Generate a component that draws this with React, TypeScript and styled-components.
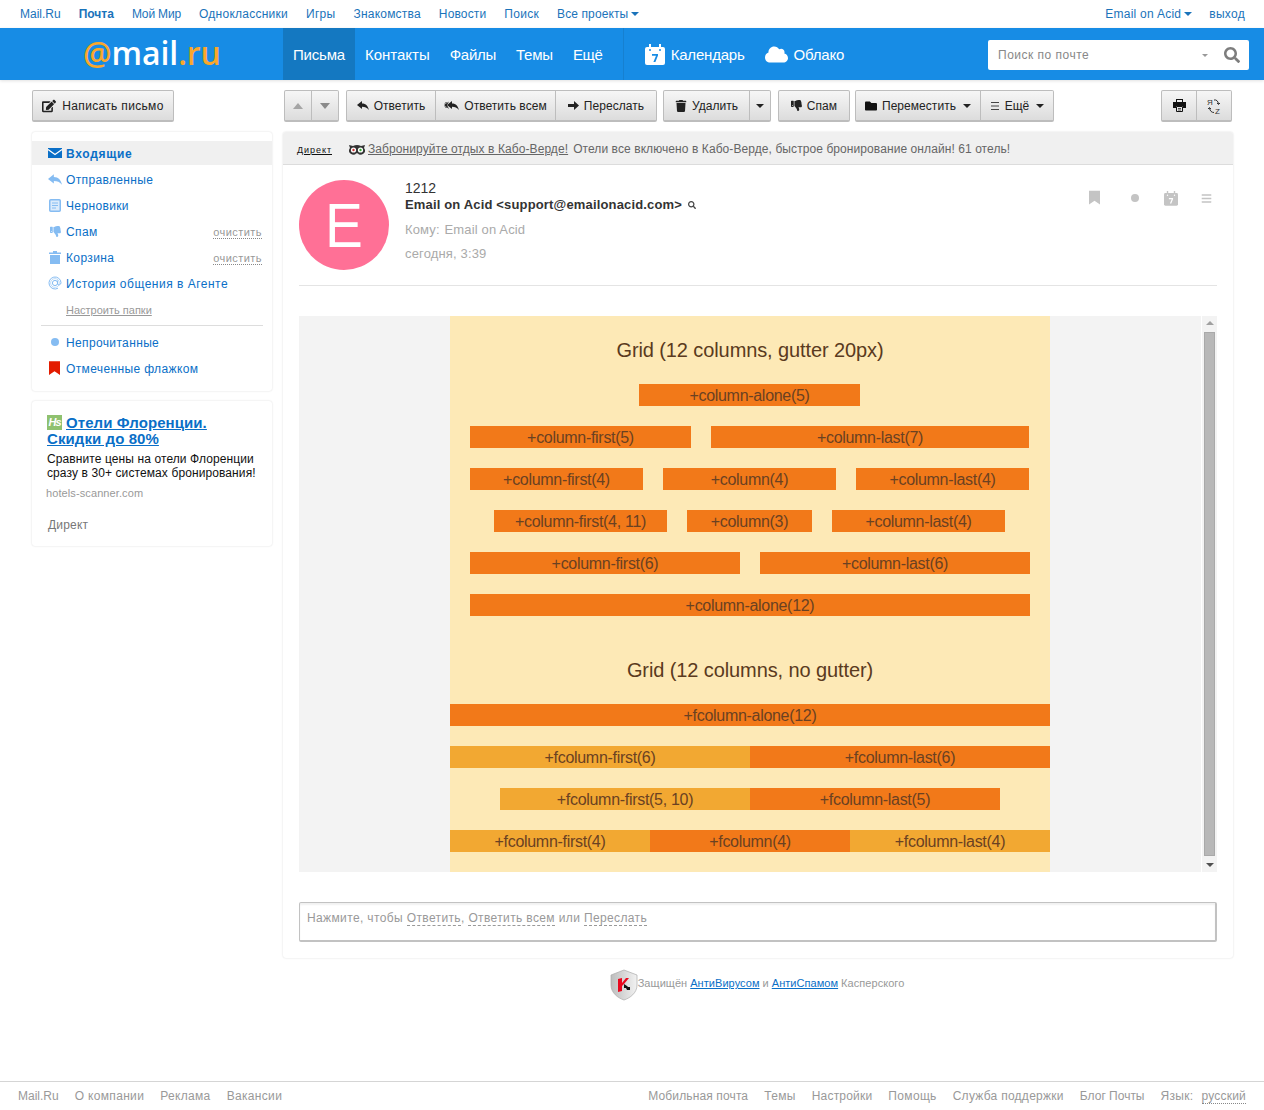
import React from "react";
import styled, { createGlobalStyle } from "styled-components";
import { FaTrash, FaThumbsDown, FaFolder, FaEdit, FaCloud, FaSearch, FaBars } from "react-icons/fa";

const Global = createGlobalStyle`
  html, body { margin: 0; padding: 0; background: #fff; }
  body { font-family: "Liberation Sans", Arial, sans-serif; font-size: 12px; color: #333; }
  a { color: inherit; text-decoration: none; }
`;

const Page = styled.div`
  width: 1264px; height: 1110px; display: flex; flex-direction: column; overflow: hidden;
`;
const TopBar = styled.div`
  height: 28px; display: flex; align-items: center; justify-content: space-between; padding: 0 19px 0 20px;
  color: #1a73ba; flex: none;
`;
const TopGroup = styled.nav<{ $gap: number }>`
  display: flex; align-items: center; gap: ${p => p.$gap}px;
`;
const TopLink = styled.a<{ $bold?: boolean; $ls?: number }>`
  font-weight: ${p => (p.$bold ? 700 : 400)};
  display: inline-flex; align-items: center;
  letter-spacing: ${p => p.$ls ?? 0.3}px;
`;
const Caret = styled.i<{ $color?: string; $left?: number }>`
  display: inline-block; width: 0; height: 0; margin-left: ${p => p.$left ?? 3}px;
  border-left: 4px solid transparent; border-right: 4px solid transparent;
  border-top: 4px solid ${p => p.$color ?? "#1a73ba"};
`;
const SmallCaret = styled(Caret)`
  border-left-width: 3px; border-right-width: 3px; border-top-width: 3px;
`;
const Header = styled.header`
  height: 52px; background: #178ce5; display: flex; align-items: stretch; flex: none;
  box-shadow: 0 1px 3px rgba(0,0,0,.12);
`;
const LogoArea = styled.div`
  width: 283px; padding-left: 83px; box-sizing: border-box; display: flex; align-items: center; flex: none;
`;
const Logo = styled.div`
  font-family: "Open Sans", "Noto Sans", sans-serif; font-size: 32px; font-weight: 600; letter-spacing: -0.1px;
  color: #fff; line-height: 1; margin-top: -3px;
`;
const LogoAccent = styled.span`
  color: #f9a72b;
`;
const Tab = styled.a<{ $active?: boolean; $ls?: number }>`
  display: flex; align-items: center; gap: 6px; padding: 0 10px; font-size: 15px; letter-spacing: ${p => p.$ls ?? -0.2}px;
  color: #fff; background: ${p => (p.$active ? "#1478c1" : "transparent")};
`;
const HeaderSep = styled.div`
  width: 1px; margin: 0 21px 0 10px; background: #1680d0;
`;
const IconTab = styled(Tab)`
  padding: 0; margin-right: 20px;
`;
const SearchBox = styled.div`
  width: 261px; height: 30px; background: #fff; border-radius: 2px; margin: 12px 15px 0 auto;
  display: flex; align-items: center; padding: 0 9px 0 10px; box-sizing: border-box; color: #888; letter-spacing: 0.5px;
`;
const SearchText = styled.span`
  flex: 1;
`;
const SearchIcon = styled(FaSearch)`
  font-size: 16px; color: #7d7d7d; margin-left: 16px;
`;
const Body = styled.div`
  display: grid; grid-template-columns: 241px 950px; column-gap: 10px; padding-left: 32px; flex: 1; align-items: start; margin-top: 10px;
`;
const Side = styled.aside`
  display: flex; flex-direction: column; align-items: stretch;
`;
const Btn = styled.button<{ $w?: number }>`
  height: 32px; box-sizing: border-box; display: inline-flex; align-items: center; justify-content: center; gap: 5px;
  padding: 0; ${p => (p.$w ? `width: ${p.$w}px;` : "")} flex: none;
  font: 12px "Liberation Sans", Arial, sans-serif; letter-spacing: 0.05px; color: #222;
  background: linear-gradient(#f6f6f6, #dcdcdc);
  border: 1px solid #bdbdbd; border-bottom-width: 2px; border-radius: 2px;
`;
const Group = styled.div<{ $shift?: number }>`
  display: flex; flex: none; margin-left: ${p => p.$shift ?? 0}px;
  & > button { border-radius: 0; border-left: none; }
  & > button:first-child { border-left: 1px solid #bdbdbd; border-radius: 2px 0 0 2px; }
  & > button:last-child { border-radius: 0 2px 2px 0; }
`;
const ComposeBtn = styled(Btn)`
  width: 142px; margin-bottom: 10px; letter-spacing: 0.33px; gap: 6px;
`;
const Card = styled.div`
  background: #fff; border-radius: 3px; box-shadow: 0 0 2px rgba(0,0,0,.16);
`;
const FolderCard = styled(Card)`
  width: 240px; padding: 9px 0 9px; box-sizing: border-box; height: 259px;
`;
const FolderRow = styled.a<{ $active?: boolean }>`
  height: 24px; margin-bottom: 2px; display: flex; align-items: center; padding: 0 10px 0 16px;
  color: #0a6fc7; letter-spacing: ${p => (p.$active ? 0.7 : 0.36)}px; font-weight: ${p => (p.$active ? 700 : 400)};
  background: ${p => (p.$active ? "#f0f0f0" : "transparent")};
`;
const FolderIcon = styled.span<{ $color?: string; $pad?: number }>`
  width: 18px; flex: none; display: flex; align-items: center; box-sizing: border-box; padding-left: ${p => p.$pad ?? 0}px;
  color: ${p => p.$color ?? "#85bcf2"}; font-size: 13px;
`;
const FolderName = styled.span<{ $ls?: number }>`
  flex: 1; padding-top: 2px; ${p => (p.$ls ? `letter-spacing: ${p.$ls}px;` : "")}
`;
const Clear = styled.span`
  font-size: 11px; color: #999; border-bottom: 1px dotted #888; line-height: 12px; letter-spacing: 0.45px; margin-top: 3px;
`;
const Configure = styled.a`
  display: block; height: 20px; margin: 5px 0 5px 34px; line-height: 21px; font-size: 11px; color: #999; text-decoration: underline;
`;
const SideDivider = styled.div`
  height: 1px; margin: 0 9px 4px; background: #ddd;
`;
const AdCard = styled(Card)`
  width: 240px; height: 145px; margin-top: 10px; padding: 14px 14px 0 15px; box-sizing: border-box;
`;
const AdTitle = styled.a`
  display: block; font-size: 15px; font-weight: 700; line-height: 16px; color: #0a6fc7; text-decoration: underline; letter-spacing: 0.08px;
`;
const HsBadge = styled.span`
  display: inline-block; width: 15px; height: 15px; background: #8fc16f; color: #fff; font: italic 700 11px/15px "Liberation Sans", sans-serif;
  text-align: center; vertical-align: top; margin: 0 4px 0 0;
  letter-spacing: -1px;
`;
const AdText = styled.p`
  margin: 5px 0 0; line-height: 14px; color: #111; letter-spacing: 0.1px; white-space: nowrap;
`;
const AdDomain = styled.div`
  margin: 6px 0 0 -1px; font-size: 11px; line-height: 14px; color: #999; letter-spacing: 0.1px;
`;
const AdLabel = styled.div`
  margin: 18px 0 0 1px; line-height: 14px; color: #777; letter-spacing: 0.2px;
`;
const Main = styled.main`
  display: flex; flex-direction: column;
`;
const Toolbar = styled.div`
  display: flex; align-items: center; gap: 7px; padding-left: 1px; height: 32px; margin-bottom: 10px;
`;
const ToolbarEnd = styled(Group)`
  margin-left: auto; margin-right: 1px;
`;
const TipBtn = styled.i<{ $up?: boolean; $color: string }>`
  width: 0; height: 0; border-left: 5px solid transparent; border-right: 5px solid transparent;
  ${p => (p.$up ? `border-bottom: 6px solid ${p.$color};` : `border-top: 6px solid ${p.$color};`)}
`;
const ScrollTip = styled(TipBtn)`
  border-left-width: 4px; border-right-width: 4px;
  ${p => (p.$up ? "border-bottom-width: 4px;" : "border-top-width: 4px;")}
`;
const MailCard = styled(Card)`
  height: 826px; display: flex; flex-direction: column;
`;
const AdStrip = styled.div`
  height: 33px; flex: none; box-sizing: border-box; background: #f0f0f0; border-bottom: 1px solid #dcdcdc; border-radius: 3px 3px 0 0;
  display: flex; align-items: center; padding: 2px 0 0 14px; color: #666; letter-spacing: 0.08px; white-space: nowrap;
`;
const DirectLabel = styled.a`
  font-size: 9px; font-weight: 400; color: #111; text-decoration: underline; letter-spacing: 0.95px; margin: 2px 17px 0 0;
`;
const StripLink = styled.a`
  color: #666; text-decoration: underline; margin: 0 5px 0 3px;
`;
const MailHead = styled.div`
  margin: 15px 16px 0; height: 106px; flex: none; box-sizing: border-box; border-bottom: 1px solid #e4e4e4; display: flex; position: relative;
`;
const Avatar = styled.div`
  width: 90px; height: 90px; border-radius: 50%; background: #ff7096; color: #fff; display: flex; align-items: center; justify-content: center;
  font-size: 63px; font-weight: 400; line-height: 1; flex: none;
`;
const AvatarLetter = styled.span`
  display: inline-block; transform: scaleX(0.9);
`;
const Meta = styled.div`
  margin-left: 16px; display: flex; flex-direction: column;
`;
const Subject = styled.div`
  font-size: 14px; line-height: 16px; color: #333;
`;
const From = styled.div`
  font-size: 13px; font-weight: 700; line-height: 16px; color: #333; display: flex; align-items: center; gap: 6px; letter-spacing: 0.16px; margin-top: 1px;
`;
const MetaLine = styled.div<{ $top: number }>`
  margin-top: ${p => p.$top}px; font-size: 13px; line-height: 16px; color: #aaa; letter-spacing: 0.15px;
`;
const MetaValue = styled.span`
  margin-left: 1px;
`;
const HeadIcons = styled.div`
  margin-left: auto; display: flex; align-items: flex-start; padding-top: 10px; height: 20px; margin-right: 5px; gap: 0;
`;
const HeadIcon = styled.span<{ $left: number; $top: number }>`
  display: flex; margin: ${p => p.$top}px 0 0 ${p => p.$left}px;
`;
const Frame = styled.div`
  margin: 30px 16px 0; height: 556px; flex: none; background: #f3f3f3; display: flex;
`;
const FrameArea = styled.div`
  flex: 1; display: flex; justify-content: center;
`;
const Sheet = styled.div`
  width: 600px; background: #fde9b6; color: #6a4122; padding-top: 20px; box-sizing: border-box; display: flex; flex-direction: column;
`;
const SheetTitle = styled.h2<{ $top?: number }>`
  margin: ${p => p.$top ?? 0}px 0 0; height: 28px; font-size: 20px; line-height: 28px; font-weight: 400; text-align: center; color: #5a3a20; letter-spacing: -0.1px;
`;
const BarRow = styled.div<{ $top: number; $left: number; $gap: number }>`
  display: flex; gap: ${p => p.$gap}px; margin: ${p => p.$top}px 0 0 ${p => p.$left}px; height: 22px;
`;
const Bar = styled.div<{ $w: number; $light?: boolean }>`
  width: ${p => p.$w}px; height: 22px; flex: none; background: ${p => (p.$light ? "#f2a832" : "#f27919")};
  text-align: center; font-size: 16px; line-height: 24px; color: #6a4122; letter-spacing: -0.3px; overflow: hidden;
`;
const ScrollBar = styled.div`
  width: 15px; flex: none; border-left: 1px solid #fff; display: flex; flex-direction: column; align-items: center; background: #f3f3f3;
`;
const ScrollThumb = styled.div`
  width: 11px; height: 524px; box-sizing: border-box; background: #b8b8b8; border: 1px solid #a9a9a9; margin: 2px 0;
`;
const ScrollBtn = styled.div`
  height: 14px; display: flex; align-items: center; justify-content: center;
`;
const ReplyBox = styled.div`
  margin: 30px 16px 0; height: 40px; box-sizing: border-box; border: 1px solid #c2c2c2; border-width: 1px 2px 2px 1px; border-radius: 2px; box-shadow: inset 0 2px 2px rgba(0,0,0,.06);
  padding: 8px 7px; color: #999; letter-spacing: 0.37px; line-height: 14px;
`;
const Dashed = styled.span`
  border-bottom: 1px dashed #999;
`;
const Kaspersky = styled.div`
  display: flex; align-items: flex-start; justify-content: center; height: 32px; margin: 11px 0 0 -2px; font-size: 11px; line-height: 28px; color: #999; letter-spacing: 0.05px;
`;
const ShieldMark = styled.svg`
  margin-right: 0; flex: none;
`;
const KLink = styled.a`
  color: #0a6fc7; text-decoration: underline; margin: 0 3px;
`;
const Footer = styled.footer`
  height: 29px; flex: none; box-sizing: border-box; border-top: 1px solid #d5d5d5; display: flex; align-items: center; justify-content: space-between;
  padding: 0 18px; color: #999; margin-top: auto;
`;
const FooterGroup = styled.div`
  display: flex; gap: 16px;
`;
const FootItem = styled.span<{ $ls?: number }>`
  letter-spacing: ${p => p.$ls ?? 0.33}px;
`;
const Dotted = styled(FootItem)`
  border-bottom: 1px dotted #888; color: #999; margin-left: -8px;
`;

const CalIcon = ({ bg, fg, size }: { bg: string; fg: string; size: number }) => (
  <svg width={size} height={size * 1.05} viewBox="0 0 20 21">
    <rect x="0" y="3" width="20" height="18" rx="2" fill={bg} />
    <rect x="4" y="0" width="2" height="5" fill={bg} />
    <rect x="14" y="0" width="2" height="5" fill={bg} />
    <circle cx="5" cy="6" r="1" fill={fg} />
    <circle cx="15" cy="6" r="1" fill={fg} />
    <path d="M7 10h6v1.6L10.4 18H8.4l2.6-6.2H7z" fill={fg} />
  </svg>
);
const Owl = () => (
  <svg width="16" height="11" viewBox="0 0 16 11">
    <path d="M0 1 L4 2 Q8 0 12 2 L16 1 L15 4 A4 4 0 1 1 8.5 9 L8 10 L7.5 9 A4 4 0 1 1 1 4Z" fill="#333" />
    <circle cx="4.5" cy="6" r="2.6" fill="#fff" /><circle cx="11.5" cy="6" r="2.6" fill="#fff" />
    <circle cx="4.5" cy="6" r="1.2" fill="#c33" /><circle cx="11.5" cy="6" r="1.2" fill="#3a3" />
  </svg>
);
const Bookmark = ({ color, w, h }: { color: string; w: number; h: number }) => (
  <svg width={w} height={h} viewBox="0 0 12 15"><path d="M0 0h12v15L6 11 0 15z" fill={color} /></svg>
);
const Envelope = () => (
  <svg width="14" height="10" viewBox="0 0 14 10">
    <rect width="14" height="10" fill="#0a6fc7" />
    <path d="M0 1.5 L7 6.5 L14 1.5" fill="none" stroke="#fff" strokeWidth="1.2" />
  </svg>
);
const Draft = () => (
  <svg width="12" height="13" viewBox="0 0 12 13">
    <rect x=".75" y=".75" width="10.5" height="11.5" rx="1" fill="#dcebfb" stroke="#85bcf2" strokeWidth="1.5" />
    <path d="M3 4h6M3 6.5h6M3 9h4" stroke="#85bcf2" />
  </svg>
);
const Trash = () => (
  <svg width="12" height="13" viewBox="0 0 12 13"><path d="M4 0h4v1.4h4v1.6H0V1.4h4zM1 4h10v9H1z" fill="#85bcf2" /></svg>
);
const AtSign = () => (
  <svg width="14" height="14" viewBox="0 0 14 14" fill="none" stroke="#85bcf2">
    <circle cx="7" cy="7" r="2.6" /><path d="M9.6 4.5v3.2c0 1.8 3.4 1.6 3.4-1A6 6 0 1 0 10 12.2" /><circle cx="7" cy="7" r="4.4" strokeOpacity=".5" />
  </svg>
);
const Dot = ({ color, size }: { color: string; size: number }) => (
  <svg width={size} height={size} viewBox="0 0 10 10"><circle cx="5" cy="5" r="5" fill={color} /></svg>
);
const Shield = () => (
  <ShieldMark width="28" height="32" viewBox="0 0 28 32">
    <defs><linearGradient id="sh" x1="0" x2="1"><stop offset="0" stopColor="#bdbdbd" /><stop offset="1" stopColor="#f2f2f2" /></linearGradient></defs>
    <path d="M14 1 L27 6 V16 C27 24 20 29 14 31 C8 29 1 24 1 16 V6Z" fill="url(#sh)" stroke="#aaa" strokeWidth=".7" />
    <path d="M8 10l4-1v5l4-5h3l-5 6-2 2v5l-4 1z" fill="#e8081e" />
    <path d="M14 15l3 2 1 1h2v3h-3l-1-2h-2z" fill="#111" />
  </ShieldMark>
);
const ReplyIcon = ({ color, w = 12, h = 9 }: { color: string; w?: number; h?: number }) => (
  <svg width={w} height={h} viewBox="0 0 12 9"><path d="M0 4 L5 0 V2.4 C9 2.4 11 5 12 9 C10 6.6 8 5.8 5 5.8 V8 Z" fill={color} /></svg>
);
const ReplyAllIcon = () => (
  <svg width="15" height="9" viewBox="0 0 15 9">
    <path d="M3 4 L8 0 V2.4 C12 2.4 14 5 15 9 C13 6.6 11 5.8 8 5.8 V8 Z" fill="#222" />
    <path d="M5 0.5 L0 4 L5 8 L3 4z" fill="#222" />
    <path d="M2.5 1 L1 2.6 M2.5 7 L1 5.4" stroke="#222" />
  </svg>
);
const ForwardIcon = () => (
  <svg width="11" height="9" viewBox="0 0 11 9"><path d="M0 3h6V0l5 4.5L6 9V6H0z" fill="#222" /></svg>
);
const PrintIcon = () => (
  <svg width="13" height="13" viewBox="0 0 13 13">
    <path d="M3 0h7v3H9V1H4v2H3z" fill="#111" />
    <path d="M0 3h13v6h-3V7H3v2H0z" fill="#111" />
    <path d="M3.5 7.5h6v5h-6z" fill="none" stroke="#111" />
    <path d="M5 9.5h3M5 11h3" stroke="#111" strokeWidth=".7" />
  </svg>
);
const Lines = () => (
  <svg width="10" height="10" viewBox="0 0 10 10"><path d="M1 1.5h8M1 5h8M1 8.5h8" stroke="#444" strokeWidth="1" /></svg>
);
const Translate = () => (
  <svg width="14" height="16" viewBox="0 0 14 16" fill="none" stroke="#333" strokeWidth="1">
    <text x="0" y="7" fontSize="8" fontFamily="Liberation Sans" fill="#333" stroke="none">Я</text>
    <text x="8" y="15.5" fontSize="8" fontFamily="Liberation Sans" fill="#333" stroke="none">Z</text>
    <path d="M7 2 C9.5 1.5 11 3 11.5 6" />
    <path d="M7 14.5 C4.5 14.5 3 13 2.5 10" />
    <path d="M10 5l1.5 1.5L13 5M1 11l1.5-1.5L4 11" />
  </svg>
);

type B = { w: number; t: string; light?: boolean };
const Bars = ({ top, left, gap, items }: { top: number; left: number; gap: number; items: B[] }) => (
  <BarRow $top={top} $left={left} $gap={gap}>
    {items.map(i => <Bar key={i.t} $w={i.w} $light={i.light}>{i.t}</Bar>)}
  </BarRow>
);

export default function App() {
  return (
    <Page>
      <Global />
      <TopBar>
        <TopGroup $gap={18}>
          <TopLink $ls={0}>Mail.Ru</TopLink>
          <TopLink $bold $ls={0}>Почта</TopLink>
          <TopLink $ls={-0.15}>Мой Мир</TopLink>
          <TopLink $ls={0.25}>Одноклассники</TopLink>
          <TopLink>Игры</TopLink>
          <TopLink $ls={0.2}>Знакомства</TopLink>
          <TopLink $ls={0.15}>Новости</TopLink>
          <TopLink>Поиск</TopLink>
          <TopLink $ls={0.1}>Все проекты<Caret /></TopLink>
        </TopGroup>
        <TopGroup $gap={17}>
          <TopLink $ls={0.25}>Email on Acid<Caret /></TopLink>
          <TopLink>выход</TopLink>
        </TopGroup>
      </TopBar>
      <Header>
        <LogoArea>
          <Logo><LogoAccent>@</LogoAccent>mail<LogoAccent>.ru</LogoAccent></Logo>
        </LogoArea>
        <Tab $active>Письма</Tab>
        <Tab $ls={0}>Контакты</Tab>
        <Tab $ls={-0.3}>Файлы</Tab>
        <Tab>Темы</Tab>
        <Tab $ls={-0.3}>Ещё</Tab>
        <HeaderSep />
        <IconTab><CalIcon bg="#fff" fg="#178ce5" size={20} />Календарь</IconTab>
        <IconTab><FaCloud size={23} color="#fff" />Облако</IconTab>
        <SearchBox>
          <SearchText>Поиск по почте</SearchText>
          <SmallCaret $color="#999" />
          <SearchIcon />
        </SearchBox>
      </Header>
      <Body>
        <Side>
          <ComposeBtn><FaEdit size={14} color="#222" />Написать письмо</ComposeBtn>
          <FolderCard>
            <FolderRow $active><FolderIcon><Envelope /></FolderIcon><FolderName>Входящие</FolderName></FolderRow>
            <FolderRow><FolderIcon><ReplyIcon color="#85bcf2" w={14} h={11} /></FolderIcon><FolderName>Отправленные</FolderName></FolderRow>
            <FolderRow><FolderIcon $pad={1}><Draft /></FolderIcon><FolderName>Черновики</FolderName></FolderRow>
            <FolderRow><FolderIcon $pad={2}><FaThumbsDown size={11} /></FolderIcon><FolderName>Спам</FolderName><Clear>очистить</Clear></FolderRow>
            <FolderRow><FolderIcon $pad={1}><Trash /></FolderIcon><FolderName>Корзина</FolderName><Clear>очистить</Clear></FolderRow>
            <FolderRow><FolderIcon><AtSign /></FolderIcon><FolderName $ls={0.5}>История общения в Агенте</FolderName></FolderRow>
            <Configure>Настроить папки</Configure>
            <SideDivider />
            <FolderRow><FolderIcon $pad={3}><Dot color="#85bcf2" size={8} /></FolderIcon><FolderName>Непрочитанные</FolderName></FolderRow>
            <FolderRow><FolderIcon $pad={1}><Bookmark color="#e31c00" w={11} h={14} /></FolderIcon><FolderName>Отмеченные флажком</FolderName></FolderRow>
          </FolderCard>
          <AdCard>
            <AdTitle><HsBadge>Hs</HsBadge>Отели Флоренции.<br />Скидки до 80%</AdTitle>
            <AdText>Сравните цены на отели Флоренции<br />сразу в 30+ системах бронирования!</AdText>
            <AdDomain>hotels-scanner.com</AdDomain>
            <AdLabel>Директ</AdLabel>
          </AdCard>
        </Side>
        <Main>
          <Toolbar>
            <Group>
              <Btn $w={28}><TipBtn $up $color="#a5a5a5" /></Btn>
              <Btn $w={27}><TipBtn $color="#8a8a8a" /></Btn>
            </Group>
            <Group>
              <Btn $w={90}><ReplyIcon color="#222" />Ответить</Btn>
              <Btn $w={120}><ReplyAllIcon />Ответить всем</Btn>
              <Btn $w={101}><ForwardIcon />Переслать</Btn>
            </Group>
            <Group $shift={-1}>
              <Btn $w={87}><FaTrash size={12} color="#222" />Удалить</Btn>
              <Btn $w={21}><Caret $color="#222" $left={0} /></Btn>
            </Group>
            <Btn $w={72}><FaThumbsDown size={11} color="#222" />Спам</Btn>
            <Group $shift={-2}>
              <Btn $w={126}><FaFolder size={12} color="#111" />Переместить<Caret $color="#222" $left={2} /></Btn>
              <Btn $w={73}><Lines />Ещё<Caret $color="#222" $left={2} /></Btn>
            </Group>
            <ToolbarEnd>
              <Btn $w={36}><PrintIcon /></Btn>
              <Btn $w={35}><Translate /></Btn>
            </ToolbarEnd>
          </Toolbar>
          <MailCard>
            <AdStrip>
              <DirectLabel>Директ</DirectLabel>
              <Owl />
              <StripLink>Забронируйте отдых в Кабо-Верде!</StripLink>
              Отели все включено в Кабо-Верде, быстрое бронирование онлайн! 61 отель!
            </AdStrip>
            <MailHead>
              <Avatar><AvatarLetter>E</AvatarLetter></Avatar>
              <Meta>
                <Subject>1212</Subject>
                <From>Email on Acid &lt;support@emailonacid.com&gt; <FaSearch size={8} color="#444" /></From>
                <MetaLine $top={9}>Кому: <MetaValue>Email on Acid</MetaValue></MetaLine>
                <MetaLine $top={8}>сегодня, 3:39</MetaLine>
              </Meta>
              <HeadIcons>
                <Bookmark color="#c4c4c4" w={11} h={15} />
                <HeadIcon $left={31} $top={4}><Dot color="#c4c4c4" size={8} /></HeadIcon>
                <HeadIcon $left={25} $top={1}><CalIcon bg="#c4c4c4" fg="#fff" size={14} /></HeadIcon>
                <HeadIcon $left={23} $top={3}><FaBars size={11} color="#c4c4c4" /></HeadIcon>
              </HeadIcons>
            </MailHead>
            <Frame>
              <FrameArea>
                <Sheet>
                  <SheetTitle>Grid (12 columns, gutter 20px)</SheetTitle>
                  <Bars top={20} left={189} gap={0} items={[{ w: 221, t: "+column-alone(5)" }]} />
                  <Bars top={20} left={20} gap={20} items={[{ w: 221, t: "+column-first(5)" }, { w: 318, t: "+column-last(7)" }]} />
                  <Bars top={20} left={20} gap={20} items={[{ w: 173, t: "+column-first(4)" }, { w: 173, t: "+column(4)" }, { w: 173, t: "+column-last(4)" }]} />
                  <Bars top={20} left={44} gap={20} items={[{ w: 173, t: "+column-first(4, 11)" }, { w: 125, t: "+column(3)" }, { w: 173, t: "+column-last(4)" }]} />
                  <Bars top={20} left={20} gap={20} items={[{ w: 270, t: "+column-first(6)" }, { w: 270, t: "+column-last(6)" }]} />
                  <Bars top={20} left={20} gap={0} items={[{ w: 560, t: "+column-alone(12)" }]} />
                  <SheetTitle $top={40}>Grid (12 columns, no gutter)</SheetTitle>
                  <Bars top={20} left={0} gap={0} items={[{ w: 600, t: "+fcolumn-alone(12)" }]} />
                  <Bars top={20} left={0} gap={0} items={[{ w: 300, t: "+fcolumn-first(6)", light: true }, { w: 300, t: "+fcolumn-last(6)" }]} />
                  <Bars top={20} left={50} gap={0} items={[{ w: 250, t: "+fcolumn-first(5, 10)", light: true }, { w: 250, t: "+fcolumn-last(5)" }]} />
                  <Bars top={20} left={0} gap={0} items={[{ w: 200, t: "+fcolumn-first(4)", light: true }, { w: 200, t: "+fcolumn(4)" }, { w: 200, t: "+fcolumn-last(4)", light: true }]} />
                </Sheet>
              </FrameArea>
              <ScrollBar>
                <ScrollBtn><ScrollTip $up $color="#a0a0a0" /></ScrollBtn>
                <ScrollThumb />
                <ScrollBtn><ScrollTip $color="#505050" /></ScrollBtn>
              </ScrollBar>
            </Frame>
            <ReplyBox>
              Нажмите, чтобы <Dashed>Ответить</Dashed>, <Dashed>Ответить всем</Dashed> или <Dashed>Переслать</Dashed>
            </ReplyBox>
          </MailCard>
          <Kaspersky>
            <Shield />
            Защищён<KLink>АнтиВирусом</KLink>и<KLink>АнтиСпамом</KLink>Касперского
          </Kaspersky>
        </Main>
      </Body>
      <Footer>
        <FooterGroup>
          <FootItem $ls={0}>Mail.Ru</FootItem><FootItem>О компании</FootItem><FootItem>Реклама</FootItem><FootItem>Вакансии</FootItem>
        </FooterGroup>
        <FooterGroup>
          <FootItem $ls={0.13}>Мобильная почта</FootItem><FootItem>Темы</FootItem><FootItem $ls={0.2}>Настройки</FootItem><FootItem>Помощь</FootItem><FootItem $ls={0.27}>Служба поддержки</FootItem><FootItem $ls={0}>Блог Почты</FootItem><FootItem>Язык:</FootItem><Dotted $ls={0.2}>русский</Dotted>
        </FooterGroup>
      </Footer>
    </Page>
  );
}
